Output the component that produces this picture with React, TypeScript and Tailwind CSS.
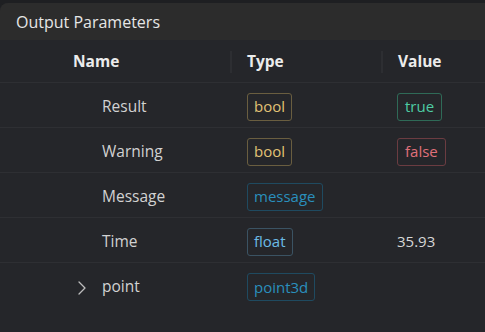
import { ChevronRight } from "lucide-react"

type Row = {
  name: string
  type: string
  typeClass: string
  value?: string
  valueClass?: string
  expandable?: boolean
}

const rows: Row[] = [
  {
    name: "Result",
    type: "bool",
    typeClass: "text-[#e2c275] border-[#6a5e40]",
    value: "true",
    valueClass: "text-[#4ecca3] border-[#2f6a57] border rounded-[3px] px-[7px] h-[28px]",
  },
  {
    name: "Warning",
    type: "bool",
    typeClass: "text-[#e2c275] border-[#6a5e40]",
    value: "false",
    valueClass: "text-[#e0707a] border-[#6b3c41] border rounded-[3px] px-[7px] h-[28px]",
  },
  { name: "Message", type: "message", typeClass: "text-[#2a8fbd] border-[#1f4a60]" },
  {
    name: "Time",
    type: "float",
    typeClass: "text-[#6bbbe6] border-[#3b5363]",
    value: "35.93",
    valueClass: "text-[#d6d6d6]",
  },
  { name: "point", type: "point3d", typeClass: "text-[#2a8fbd] border-[#1f4a60]", expandable: true },
]

export default function App() {
  return (
    <div
      className="w-[485px] h-[332px] bg-[#1e1f22] pt-[3px] overflow-hidden"
      style={{ fontFamily: '"Open Sans", "Noto Sans", sans-serif' }}
    >
      <div className="h-full rounded-tl-[8px] overflow-hidden bg-[#25262a] flex flex-col">
        {/* Panel title */}
        <div className="h-[37px] bg-[#2c2c2c] flex items-center pl-[16px] text-[16px] text-[#e6e6e6]">
          Output Parameters
        </div>

        {/* Header row */}
        <div className="grid grid-cols-[230px_151px_1fr] h-[43px] pt-[2px] border-b border-[#2e2f33] text-[15.5px] font-bold text-[#ececec]">
          <div className="flex items-center pl-[73px]">Name</div>
          <div className="flex items-center">
            <span className="w-[2px] h-[22px] bg-[#2d2e32]" />
            <span className="ml-[15px]">Type</span>
          </div>
          <div className="flex items-center">
            <span className="w-[2px] h-[22px] bg-[#2d2e32]" />
            <span className="ml-[15px]">Value</span>
          </div>
        </div>

        {/* Body rows */}
        {rows.map((r, i) => (
          <div
            key={r.name}
            className={`grid grid-cols-[230px_151px_1fr] h-[45px] pt-[3px] text-[15.5px] ${
              i < rows.length - 1 ? "border-b border-[#2e2f33]" : ""
            }`}
          >
            <div className="flex items-center text-[#d2d2d2]">
              <span className="w-[102px] flex justify-end pr-[8px] mt-[2px]">
                {r.expandable && <ChevronRight className="w-[24px] h-[24px] text-[#bdbdbd]" strokeWidth={1.3} />}
              </span>
              {r.name}
            </div>
            <div className="flex items-center pl-[17px]">
              <span className={`h-[28px] flex items-center px-[6px] border rounded-[3px] text-[15px] ${r.typeClass}`}>
                {r.type}
              </span>
            </div>
            <div className="flex items-center pl-[16px]">
              {r.value && <span className={`flex items-center text-[15px] ${r.valueClass}`}>{r.value}</span>}
            </div>
          </div>
        ))}
      </div>
    </div>
  )
}
